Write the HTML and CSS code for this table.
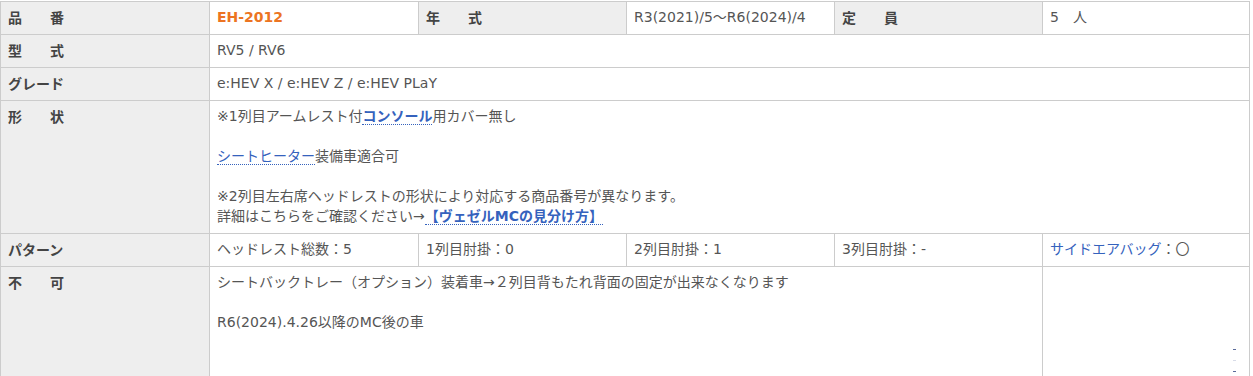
FILE: index.html
```html
<!DOCTYPE html>
<html lang="ja">
<head>
<meta charset="utf-8">
<title>EH-2012</title>
<link rel="stylesheet" href="styles.css">
</head>
<body>
<table class="spec">
  <colgroup>
    <col class="c1"><col class="c2"><col class="c3"><col class="c4"><col class="c5"><col class="c6">
  </colgroup>
  <tr>
    <th>品　　番</th>
    <td class="code">EH-2012</td>
    <th>年　　式</th>
    <td>R3(2021)/5～R6(2024)/4</td>
    <th>定　　員</th>
    <td>5　人</td>
  </tr>
  <tr>
    <th>型　　式</th>
    <td colspan="5">RV5 / RV6</td>
  </tr>
  <tr>
    <th>グレード</th>
    <td colspan="5">e:HEV X / e:HEV Z / e:HEV PLaY</td>
  </tr>
  <tr>
    <th>形　　状</th>
    <td colspan="5">※1列目アームレスト付<a class="lnk strong">コンソール</a>用カバー無し<br><br><a class="lnk">シートヒーター</a>装備車適合可<br><br>※2列目左右席ヘッドレストの形状により対応する商品番号が異なります。<br>詳細はこちらをご確認ください→<a class="lnk strong">【ヴェゼルMCの見分け方】</a></td>
  </tr>
  <tr>
    <th>パターン</th>
    <td>ヘッドレスト総数：5</td>
    <td>1列目肘掛：0</td>
    <td>2列目肘掛：1</td>
    <td>3列目肘掛：-</td>
    <td><span class="blue">サイドエアバッグ</span>：〇</td>
  </tr>
  <tr>
    <th>不　　可</th>
    <td colspan="4"><div class="tall">シートバックトレー（オプション）装着車→２列目背もたれ背面の固定が出来なくなります<br><br>R6(2024).4.26以降のMC後の車</div></td>
    <td><div class="marks"><span class="mk"></span><span class="mk faint"></span><span class="mk"></span></div></td>
  </tr>
</table>
</body>
</html>
```
FILE: styles.css
```css
html, body {
  margin: 0;
  padding: 0;
  background: #fff;
}
body {
  padding-top: 1px;
  font-family: "DejaVu Sans", "Noto Sans CJK JP", sans-serif;
  font-size: 14px;
  color: #555;
}
.spec {
  border-collapse: collapse;
  table-layout: fixed;
  width: 1250px;
}
.c1, .c2 { width: 209px; }
.c3, .c4, .c5 { width: 208px; }
.c6 { width: 207px; }
.spec th, .spec td {
  border: 1px solid #cccccc;
  padding: 5px 7px 7px;
  line-height: 20px;
  text-align: left;
  vertical-align: top;
  white-space: nowrap;
}
.spec th {
  background: #eeeeee;
  color: #444;
  font-weight: bold;
  font-family: "Noto Sans CJK JP", sans-serif;
}
.code {
  color: #ec7422;
  font-weight: bold;
}
.lnk {
  color: #3562bd;
  text-decoration: none;
  border-bottom: 1px dotted #3562bd;
}
.strong {
  font-weight: bold;
}
.blue {
  color: #3562bd;
}
.tall {
  min-height: 130px;
}
.marks {
  display: flex;
  flex-direction: column;
  align-items: flex-end;
  gap: 10px;
  padding-top: 77px;
  padding-right: 6px;
}
.mk {
  display: block;
  width: 3px;
  height: 1px;
  background: #5a6a9a;
}
.mk.faint {
  background: #d8dce8;
}
```
